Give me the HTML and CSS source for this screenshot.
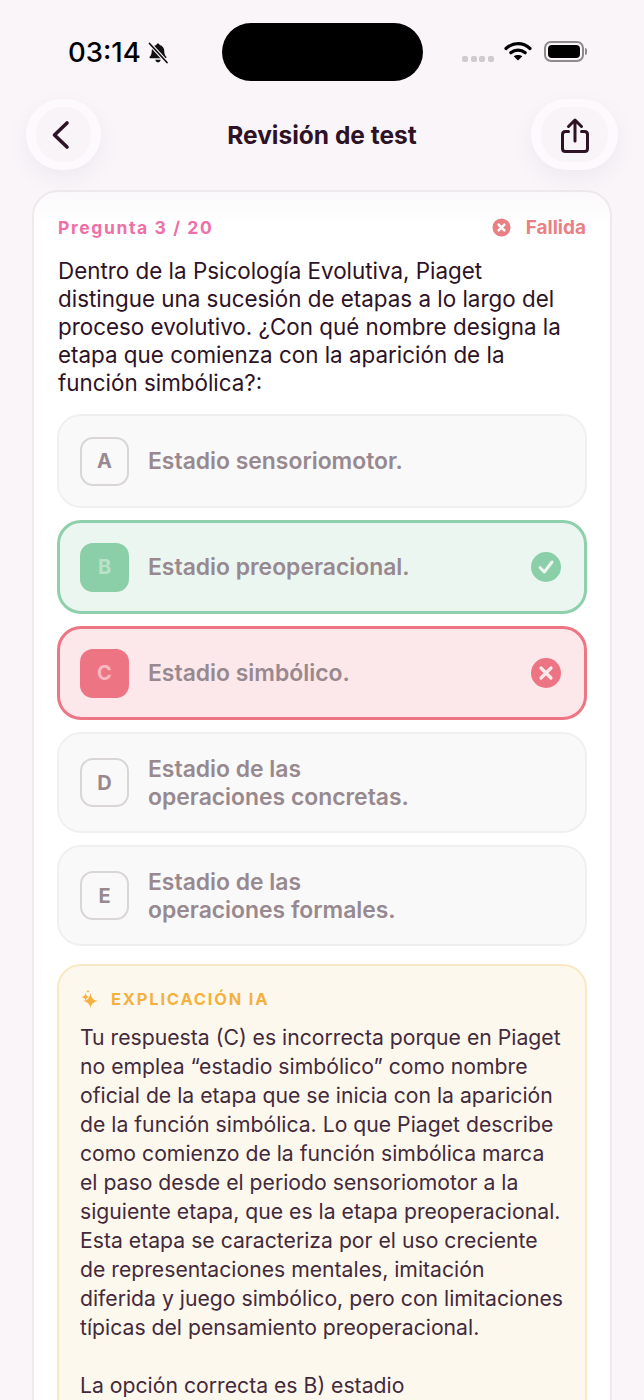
FILE: index.html
```html
<!DOCTYPE html>
<html lang="es">
<head>
  <meta charset="UTF-8">
  <meta name="viewport" content="width=device-width, initial-scale=1.0">
  <title>Revisión de test</title>
  <link rel="stylesheet" href="styles.css">
</head>
<body>
  <div class="status-bar">
    <div class="status-left">
      <span class="clock">03:14</span>
      <svg class="bell" viewBox="0 0 22 22" width="22" height="22">
        <path d="M11 1.500c.9 0 1.500.6 1.600 1.400 3 .7 4.700 3.200 4.700 6.300 0 2.600.7 4.200 2 5.600.5.6.2 1.400-.7 1.400H3.400c-.9 0-1.200-.8-.7-1.400 1.300-1.400 2-3 2-5.600 0-3.100 1.700-5.600 4.700-6.300.1-.8.7-1.400 1.600-1.400z" fill="#111"/>
        <path d="M8.300 17.700h5.400c-.2 1.500-1.300 2.600-2.700 2.600s-2.500-1.100-2.700-2.600z" fill="#111"/>
        <path d="M2.500 1.500l17.500 19" stroke="#f9f5f9" stroke-width="4"/>
        <path d="M2.500 1.500l17.500 19" stroke="#111" stroke-width="1.700" stroke-linecap="round"/>
      </svg>
    </div>
    <div class="island"></div>
    <div class="status-right">
      <div class="signal"><i></i><i></i><i></i><i></i></div>
      <svg class="wifi" viewBox="0 0 28 20" width="28" height="20">
        <path d="M2 7.500c7-6.500 17-6.500 24 0" fill="none" stroke="#000" stroke-width="3.200" stroke-linecap="round"/>
        <path d="M6.800 11.800c4.300-3.700 10.100-3.700 14.400 0" fill="none" stroke="#000" stroke-width="3.200" stroke-linecap="round"/>
        <path d="M14 19.500l-4.300-4.200c2.500-1.900 6.100-1.900 8.600 0z" fill="#000"/>
      </svg>
      <div class="battery"><div class="battery-fill"></div></div>
      <div class="battery-tip"></div>
    </div>
  </div>

  <header class="top-bar">
    <button class="nav-btn back-btn">
      <svg viewBox="0 0 24 32" width="24" height="32">
        <path d="M18 4L5.500 16 18 28" fill="none" stroke="#2e1225" stroke-width="3.600" stroke-linecap="round" stroke-linejoin="round"/>
      </svg>
    </button>
    <h1 class="title">Revisión de test</h1>
    <button class="nav-btn share-btn">
      <svg viewBox="0 0 32 38" width="32" height="38">
        <path d="M9.500 14.500H6.500c-1.800 0-3 1.200-3 3v14c0 1.800 1.200 3 3 3h19c1.800 0 3-1.200 3-3v-14c0-1.800-1.200-3-3-3h-3" fill="none" stroke="#2e1225" stroke-width="3" stroke-linecap="round"/>
        <path d="M16 24V3M9.500 9.500L16 3l6.500 6.500" fill="none" stroke="#2e1225" stroke-width="3" stroke-linecap="round" stroke-linejoin="round"/>
      </svg>
    </button>
  </header>

  <main class="card">
    <div class="card-head">
      <span class="counter">Pregunta 3 / 20</span>
      <span class="result">
        <svg viewBox="0 0 20 20" width="19" height="19">
          <circle cx="10" cy="10" r="9.500" fill="#e98084"/>
          <path d="M7 7l6 6M13 7l-6 6" stroke="#fff" stroke-width="2.600" stroke-linecap="round"/>
        </svg>
        Fallida
      </span>
    </div>

    <p class="question">Dentro de la Psicología Evolutiva, Piaget<br>distingue una sucesión de etapas a lo largo del<br>proceso evolutivo. ¿Con qué nombre designa la<br>etapa que comienza con la aparición de la<br>función simbólica?:</p>

    <div class="options">
      <div class="option">
        <span class="letter">A</span>
        <span class="option-text">Estadio sensoriomotor.</span>
      </div>
      <div class="option correct">
        <span class="letter">B</span>
        <span class="option-text">Estadio preoperacional.</span>
        <svg class="mark" viewBox="0 0 30 30" width="30" height="30">
          <circle cx="15" cy="15" r="15" fill="#8bcfa8"/>
          <path d="M9 15.500l4.300 4.500L21 10" fill="none" stroke="#edf6f0" stroke-width="3" stroke-linecap="round" stroke-linejoin="round"/>
        </svg>
      </div>
      <div class="option wrong">
        <span class="letter">C</span>
        <span class="option-text">Estadio simbólico.</span>
        <svg class="mark" viewBox="0 0 30 30" width="30" height="30">
          <circle cx="15" cy="15" r="15" fill="#ec7483"/>
          <path d="M10 10l10 10M20 10L10 20" stroke="#fce8ea" stroke-width="3.200" stroke-linecap="round"/>
        </svg>
      </div>
      <div class="option tall">
        <span class="letter">D</span>
        <span class="option-text">Estadio de las<br>operaciones concretas.</span>
      </div>
      <div class="option tall">
        <span class="letter">E</span>
        <span class="option-text">Estadio de las<br>operaciones formales.</span>
      </div>
    </div>

    <section class="explain">
      <div class="explain-head">
        <svg viewBox="0 0 20 20" width="20" height="20">
          <path d="M10.500 4.500Q11.300 11.200 18 12 11.300 12.800 10.500 19.500 9.700 12.800 3 12 9.700 11.200 10.500 4.500z" fill="#f4b13e"/>
          <path d="M5.500 4Q6 7.500 9.500 8 6 8.500 5.500 12 5 8.500 1.500 8 5 7.500 5.500 4z" fill="#f4b13e"/>
          <path d="M8 .5Q8.200 2 9.700 2.200 8.200 2.400 8 3.900 7.800 2.400 6.300 2.200 7.800 2 8 .5z" fill="#f4b13e"/>
        </svg>
        <span class="explain-label">Explicación IA</span>
      </div>
      <p class="explain-text">Tu respuesta (C) es incorrecta porque en Piaget<br>no emplea “estadio simbólico” como nombre<br>oficial de la etapa que se inicia con la aparición<br>de la función simbólica. Lo que Piaget describe<br>como comienzo de la función simbólica marca<br>el paso desde el periodo sensoriomotor a la<br>siguiente etapa, que es la etapa preoperacional.<br>Esta etapa se caracteriza por el uso creciente<br>de representaciones mentales, imitación<br>diferida y juego simbólico, pero con limitaciones<br>típicas del pensamiento preoperacional.</p>
      <p class="explain-text next">La opción correcta es B) estadio</p>
    </section>
  </main>
</body>
</html>
```

FILE: styles.css
```css
html, body {
  margin: 0;
  height: 1400px;
  overflow: hidden;
}
body {
  background: #f9f5f9;
  font-family: Inter, "Liberation Sans", sans-serif;
  color: #2e1225;
}
.status-bar {
  height: 99px;
  display: flex;
  align-items: flex-start;
  padding: 23px 0 0 68px;
  box-sizing: border-box;
}
.status-left {
  width: 154px;
  display: flex;
  align-items: center;
  gap: 6px;
  height: 58px;
}
.clock {
  font-size: 27.500px;
  font-weight: 500;
  color: #000;
}
.bell {
  margin-top: 1px;
}
.island {
  width: 201px;
  height: 58px;
  background: #000;
  border-radius: 29px;
}
.status-right {
  display: flex;
  align-items: center;
  height: 58px;
  margin-left: 39px;
}
.signal {
  display: flex;
  gap: 2.500px;
  margin: 13px 0 0 0;
}
.signal i {
  width: 6px;
  height: 6px;
  border-radius: 2px;
  background: #cfcbcf;
}
.wifi {
  margin: -3px 0 0 10px;
}
.battery {
  width: 40px;
  height: 21px;
  margin: -1px 0 0 12px;
  box-sizing: border-box;
  border: 2px solid #8d8a8d;
  border-radius: 7px;
  padding: 2px;
}
.battery-fill {
  height: 100%;
  background: #000;
  border-radius: 4px;
}
.battery-tip {
  width: 2px;
  height: 7px;
  margin: -1px 0 0 1px;
  background: #8d8a8d;
  border-radius: 0 2px 2px 0;
}
.top-bar {
  height: 71px;
  margin: 0 26px;
  display: grid;
  grid-template-columns: 1fr auto 1fr;
  align-items: center;
}
.nav-btn {
  height: 71px;
  box-sizing: border-box;
  border: solid #fdfafe;
  border-width: 8px 10px;
  border-radius: 36px;
  background: #f8f4f8;
  padding: 0;
  display: flex;
  align-items: center;
  justify-content: center;
  box-shadow: 0 8px 24px rgba(60, 20, 50, 0.05);
}
.back-btn {
  width: 75px;
  padding-right: 6px;
}
.share-btn {
  width: 87px;
  padding-top: 2px;
  justify-self: end;
}
.title {
  margin: 0;
  font-size: 24.500px;
  font-weight: 700;
  color: #2e1225;
}
.card {
  margin: 20px 32px 0;
  padding: 26px 24px 0;
  background: linear-gradient(#fbf9fb, #fff 34px);
  border: 2px solid #efe9ee;
  border-radius: 26px;
  height: 1300px;
  box-sizing: border-box;
}
.card-head {
  display: flex;
  justify-content: space-between;
  align-items: center;
  height: 19px;
}
.counter {
  font-size: 17.500px;
  font-weight: 700;
  letter-spacing: 1.600px;
  color: #f06fa7;
}
.result {
  display: flex;
  align-items: center;
  gap: 15px;
  font-size: 19px;
  font-weight: 700;
  color: #e98084;
}
.question {
  margin: 20px 0 17px;
  font-size: 22.400px;
  line-height: 28px;
  color: #2e1225;
}
.options {
  display: flex;
  flex-direction: column;
  gap: 12px;
  margin: 0 -1px;
}
.option {
  min-height: 94px;
  box-sizing: border-box;
  display: flex;
  align-items: center;
  gap: 19px;
  padding: 0 24px 0 21px;
  background: #f9f9f9;
  border: 2px solid #f1f0f1;
  border-radius: 24px;
}
.option.tall {
  min-height: 101px;
}
.letter {
  flex: none;
  width: 49px;
  height: 49px;
  box-sizing: border-box;
  display: flex;
  align-items: center;
  justify-content: center;
  border: 2.500px solid #d9d5d8;
  border-radius: 13px;
  font-size: 20px;
  font-weight: 700;
  color: #97898f;
}
.option-text {
  flex: 1;
  font-size: 22.900px;
  line-height: 28px;
  font-weight: 560;
  color: #97898f;
}
.mark {
  flex: none;
}
.correct {
  padding: 0 23px 0 20px;
  background: #ecf6f1;
  border: 3px solid #8ed0ab;
}
.correct .letter {
  background: #8bcfa8;
  border: 0;
  color: #b9e2ca;
}
.wrong {
  padding: 0 23px 0 20px;
  background: #fce8ea;
  border: 3px solid #ee7584;
}
.wrong .letter {
  background: #ec7483;
  border: 0;
  color: #f8b8c0;
}
.explain {
  margin: 18px -1px 0;
  padding: 22px 21px 0;
  background: #fdf8ee;
  border: 2px solid #fbe8c3;
  border-radius: 24px;
  height: 500px;
  box-sizing: border-box;
}
.explain-head {
  display: flex;
  align-items: center;
  gap: 11px;
  height: 22px;
}
.explain-label {
  font-size: 16.500px;
  font-weight: 700;
  letter-spacing: 1.800px;
  text-transform: uppercase;
  color: #f4b13e;
}
.explain-text {
  margin: 13px 0 0;
  font-size: 21.200px;
  line-height: 29px;
  color: #432a3b;
}
.explain-text.next {
  margin-top: 29px;
}
```
